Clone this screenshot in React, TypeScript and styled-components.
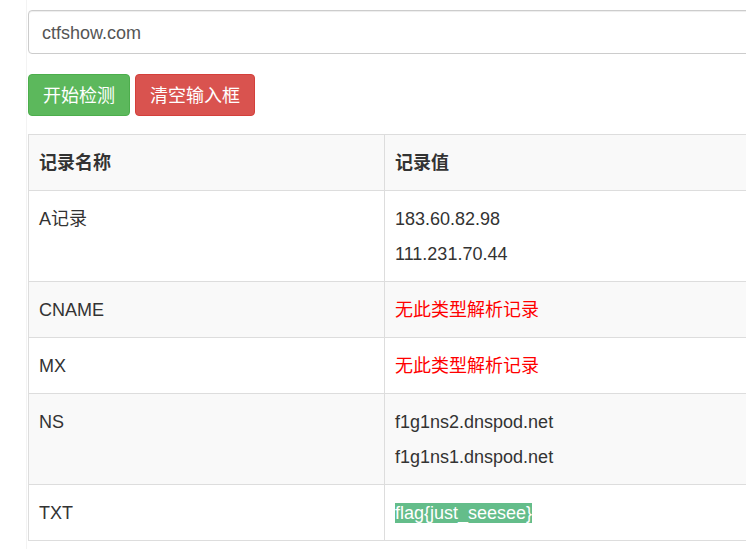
import React from "react";
import styled, { createGlobalStyle } from "styled-components";

const Global = createGlobalStyle`
  html, body {
    margin: 0;
    padding: 0;
    background: #fff;
    overflow: hidden;
  }
  body {
    font-family: "Liberation Sans", "Noto Sans CJK SC", sans-serif;
    font-size: 18px;
    color: #333;
  }
`;

const Page = styled.div`
  margin-left: 26px;
  border-left: 1px solid #f3f3f3;
  padding: 10px 0 0 1px;
  width: calc(100vw - 26px);
  height: 100vh;
  box-sizing: border-box;
  overflow: hidden;
`;

const Content = styled.div`
  width: 800px;
`;

const Input = styled.input`
  display: block;
  box-sizing: border-box;
  width: 100%;
  height: 44px;
  padding: 2px 13px 0;
  font-family: inherit;
  font-size: 18px;
  color: #555;
  background: #fff;
  border: 1px solid #ccc;
  border-radius: 4px;
  box-shadow: inset 0 1px 1px rgba(0, 0, 0, 0.075);
  outline: none;
`;

const Toolbar = styled.div`
  display: flex;
  gap: 5px;
  margin-top: 20px;
`;

const Button = styled.button<{ $variant: "success" | "danger" }>`
  box-sizing: border-box;
  height: 42px;
  padding: 1px 14px 0;
  font-family: inherit;
  font-size: 18px;
  line-height: 24px;
  color: #fff;
  border-radius: 4px;
  border: 1px solid
    ${(p) => (p.$variant === "success" ? "#4cae4c" : "#d43f3a")};
  background: ${(p) => (p.$variant === "success" ? "#5cb85c" : "#d9534f")};
  cursor: pointer;
`;

const Table = styled.table`
  margin-top: 18px;
  width: 100%;
  table-layout: fixed;
  border-collapse: separate;
  border-spacing: 0;
  border-top: 1px solid #ddd;
  border-left: 1px solid #ddd;
`;

const Row = styled.tr<{ $striped: boolean }>`
  background: ${(p) => (p.$striped ? "#f9f9f9" : "#fff")};
`;

const Cell = styled.td<{ $first?: boolean }>`
  box-sizing: border-box;
  width: ${(p) => (p.$first ? "356px" : "auto")};
  padding: 11px 10px 9px;
  line-height: 35px;
  vertical-align: top;
  text-align: left;
  border-right: 1px solid #ddd;
  border-bottom: 1px solid #ddd;
`;

const HeadCell = styled(Cell).attrs({ as: "th" })`
  font-weight: bold;
`;

const Line = styled.div``;

const Missing = styled.span`
  color: #ff0000;
`;

const Flag = styled.span`
  background: #64bd8a;
  color: #fff;
`;

type Rec = { name: string; values?: string[]; missing?: boolean; flag?: string };

const records: Rec[] = [
  { name: "A记录", values: ["183.60.82.98", "111.231.70.44"] },
  { name: "CNAME", missing: true },
  { name: "MX", missing: true },
  { name: "NS", values: ["f1g1ns2.dnspod.net", "f1g1ns1.dnspod.net"] },
  { name: "TXT", flag: "flag{just_seesee}" },
];

export default function App() {
  return (
    <>
      <Global />
      <Page>
        <Content>
          <Input defaultValue="ctfshow.com" />
          <Toolbar>
            <Button $variant="success">开始检测</Button>
            <Button $variant="danger">清空输入框</Button>
          </Toolbar>
          <Table>
            <thead>
              <Row $striped>
                <HeadCell $first>记录名称</HeadCell>
                <HeadCell>记录值</HeadCell>
              </Row>
            </thead>
            <tbody>
              {records.map((r, i) => (
                <Row key={r.name} $striped={i % 2 === 1}>
                  <Cell $first>{r.name}</Cell>
                  <Cell>
                    {r.values && r.values.map((v) => <Line key={v}>{v}</Line>)}
                    {r.missing && <Missing>无此类型解析记录</Missing>}
                    {r.flag && <Flag>{r.flag}</Flag>}
                  </Cell>
                </Row>
              ))}
            </tbody>
          </Table>
        </Content>
      </Page>
    </>
  );
}
